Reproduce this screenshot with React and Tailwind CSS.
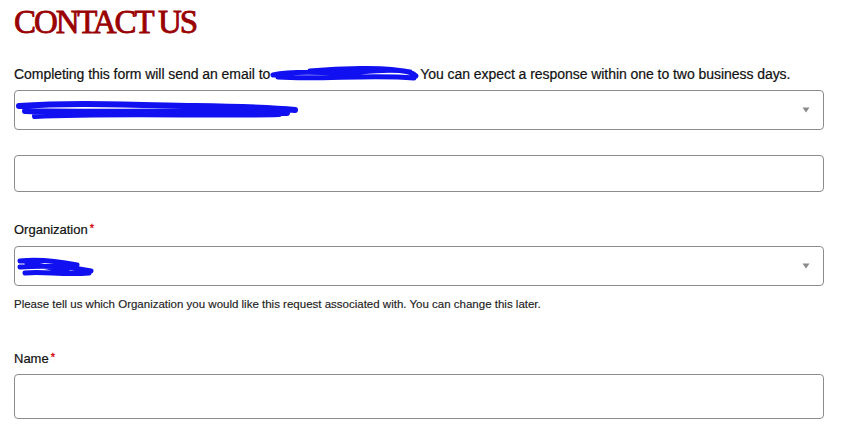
import React from "react";

function Caret() {
  return (
    <svg width="8" height="6" viewBox="0 0 8 6" className="shrink-0">
      <path d="M0.5 0.5 L7.5 0.5 L4 5.5 Z" fill="#8a8a8a" />
    </svg>
  );
}

function Scribble({ width, height, d, stroke = 5 }) {
  return (
    <svg width={width} height={height} viewBox={`0 0 ${width} ${height}`} className="shrink-0">
      <path d={d} fill="none" stroke="#1010f0" strokeWidth={stroke} strokeLinecap="round" strokeLinejoin="round" />
    </svg>
  );
}

function Label({ children }) {
  return (
    <div className="text-[13px] text-[#111] mb-[6px] [-webkit-text-stroke:0.2px_#111]">
      {children}
      <span className="text-[#d00000] text-[11px] align-top ml-[2px] [-webkit-text-stroke:0.3px_#d00000]">*</span>
    </div>
  );
}

export default function App() {
  return (
    <div className="w-[868px] h-[440px] overflow-hidden bg-white px-[14px] pr-[44px] font-['Liberation_Sans',Arial,sans-serif]">
      <h1 className="font-['Liberation_Serif',serif] text-[33px] leading-none text-[#990000] tracking-[-2.1px] pt-[6px] h-[44px] [-webkit-text-stroke:0.8px_#990000]">
        CONTACT US
      </h1>

      <p className="text-[14px] text-[#111] mt-[22px] flex items-center h-[16px] tracking-[-0.05px] [-webkit-text-stroke:0.2px_#111]">
        <span>Completing this form will send an email to</span>
        <Scribble
          width={150}
          height={18}
          stroke={5}
          d="M3 10 C30 4, 60 10, 90 7 S140 4, 146 11 M8 12 C50 15, 100 9, 144 13 M40 6 C80 2, 120 3, 140 7"
        />
        <span>You can expect a response within one to two business days.</span>
      </p>

      <div className="mt-[8px] h-[40px] border border-[#8c8c8c] rounded-[4px] flex items-center pr-[13px]">
        <div className="flex-1 flex items-center">
          <Scribble
            width={284}
            height={24}
            stroke={6}
            d="M4 8 C60 4, 120 7, 180 8 S260 10, 280 12 M10 13 C80 15, 160 12, 272 15 M20 18 C100 14, 200 18, 264 16"
          />
        </div>
        <Caret />
      </div>

      <div className="mt-[25px] h-[37px] border border-[#8c8c8c] rounded-[4px]" />

      <div className="mt-[28px]">
        <Label>Organization</Label>
      </div>

      <div className="h-[40px] border border-[#8c8c8c] rounded-[4px] flex items-center pr-[13px]">
        <div className="flex-1 flex items-center pl-[2px]">
          <Scribble
            width={78}
            height={22}
            stroke={5}
            d="M3 6 C20 4, 40 6, 60 10 M3 12 C30 10, 55 12, 74 16 M8 18 C25 16, 45 20, 72 18 M10 8 L50 16"
          />
        </div>
        <Caret />
      </div>

      <p className="text-[11.5px] text-[#222] mt-[10px] [-webkit-text-stroke:0.15px_#222]">
        Please tell us which Organization you would like this request associated with. You can change this later.
      </p>

      <div className="mt-[36px]">
        <Label>Name</Label>
      </div>

      <div className="h-[45px] border border-[#8c8c8c] rounded-[4px]" />
    </div>
  );
}
